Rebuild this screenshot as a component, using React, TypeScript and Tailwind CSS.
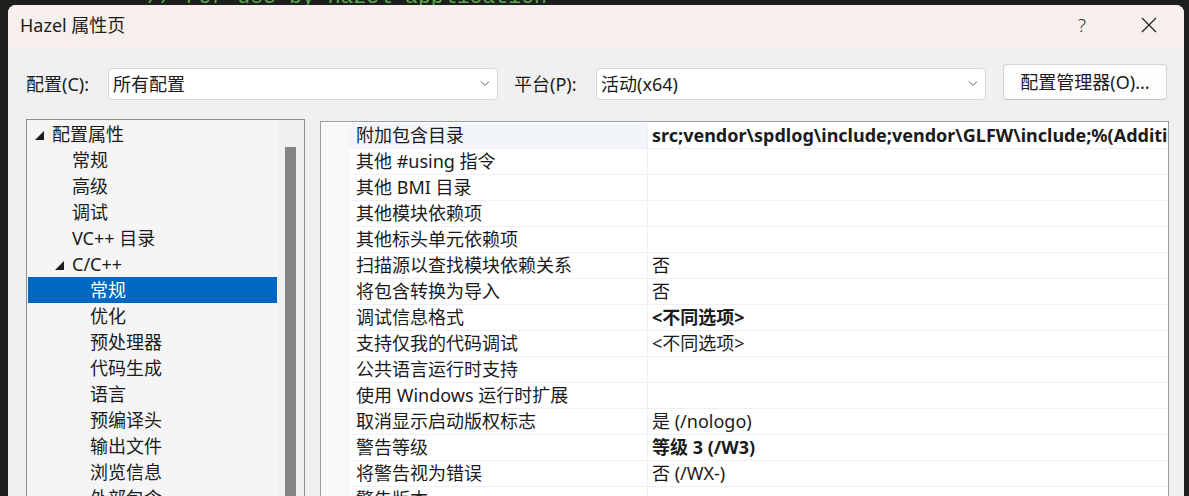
import React from "react";

type TreeItem = { label: string; level: 0 | 1 | 2; open?: boolean; selected?: boolean };

const tree: TreeItem[] = [
  { label: "配置属性", level: 0, open: true },
  { label: "常规", level: 1 },
  { label: "高级", level: 1 },
  { label: "调试", level: 1 },
  { label: "VC++ 目录", level: 1 },
  { label: "C/C++", level: 1, open: true },
  { label: "常规", level: 2, selected: true },
  { label: "优化", level: 2 },
  { label: "预处理器", level: 2 },
  { label: "代码生成", level: 2 },
  { label: "语言", level: 2 },
  { label: "预编译头", level: 2 },
  { label: "输出文件", level: 2 },
  { label: "浏览信息", level: 2 },
  { label: "外部包含", level: 2 },
  { label: "高级", level: 2 },
];

type Prop = { name: string; value?: string; bold?: boolean };

const props: Prop[] = [
  { name: "附加包含目录", value: "src;vendor\\spdlog\\include;vendor\\GLFW\\include;%(AdditionalIncludeDirectories)", bold: true },
  { name: "其他 #using 指令" },
  { name: "其他 BMI 目录" },
  { name: "其他模块依赖项" },
  { name: "其他标头单元依赖项" },
  { name: "扫描源以查找模块依赖关系", value: "否" },
  { name: "将包含转换为导入", value: "否" },
  { name: "调试信息格式", value: "<不同选项>", bold: true },
  { name: "支持仅我的代码调试", value: "<不同选项>" },
  { name: "公共语言运行时支持" },
  { name: "使用 Windows 运行时扩展" },
  { name: "取消显示启动版权标志", value: "是 (/nologo)" },
  { name: "警告等级", value: "等级 3 (/W3)", bold: true },
  { name: "将警告视为错误", value: "否 (/WX-)" },
  { name: "警告版本" },
  { name: "诊断格式" },
];

// expanded-node marker, the little ◢ wedge
function Wedge() {
  return (
    <svg width="10" height="10" viewBox="0 0 10 10" className="mt-[2px]">
      <path d="M10 1 L10 10 L1 10 Z" fill="#1c1c1c" />
    </svg>
  );
}

function Chevron() {
  return (
    <svg width="10" height="6" viewBox="0 0 10 6">
      <path d="M1 0.5 L5 4.5 L9 0.5" fill="none" stroke="#5c5c5c" strokeWidth="1" />
    </svg>
  );
}

function Combo({ text }: { text: string }) {
  return (
    <div className="flex h-[32px] w-[390px] items-center justify-between rounded-[4px] border border-[#d6d6d6] bg-white pl-[4px] pr-[7px]">
      <span className="leading-[30px]">{text}</span>
      <Chevron />
    </div>
  );
}

function TreeRow({ item }: { item: TreeItem }) {
  // indent depends on level and whether the row carries a wedge
  const pad = item.open
    ? item.level === 0
      ? "pl-[6px]"
      : "pl-[26px]"
    : item.level === 1
      ? "pl-[44px]"
      : "pl-[62px]";
  return (
    <div
      className={`flex h-[26px] items-center ${pad} ${
        item.selected ? "bg-[#0067c0] text-white" : "text-[#1b1b1b]"
      }`}
    >
      {item.open && (
        <span className="flex w-[18px] shrink-0">
          <Wedge />
        </span>
      )}
      <span className="whitespace-nowrap leading-[26px]">{item.label}</span>
    </div>
  );
}

export default function App() {
  return (
    <div className="h-[496px] w-[1189px] overflow-hidden bg-[#1e1e1e] font-['Noto_Sans','Noto_Sans_CJK_SC',sans-serif] text-[18px] text-[#1b1b1b]">
      {/* sliver of the code editor behind the dialog */}
      <div className="h-[5px] overflow-hidden">
        <div className="-mt-[14px] flex whitespace-pre pl-[147px] font-['Liberation_Mono',monospace] text-[21.5px] leading-[22px] text-[#57a64a]">
          // For use by Hazel application
        </div>
      </div>

      <div className="ml-[8px] flex h-[491px] w-[1176px] flex-col overflow-hidden rounded-t-[8px] bg-[#f0f0f0]">
        {/* title bar */}
        <div className="flex h-[43px] shrink-0 items-center bg-[#f6efec] pb-[3px] pl-[12px]">
          <span className="leading-[24px]">Hazel 属性页</span>
          <div className="ml-auto flex h-full items-center">
            <span className="flex w-[70px] justify-center text-[19px] font-light text-[#333]">?</span>
            <span className="flex w-[67px] justify-center pr-[3px]">
              <svg width="16" height="16" viewBox="0 0 16 16">
                <path d="M1 1 L15 15 M15 1 L1 15" stroke="#222" strokeWidth="1.2" />
              </svg>
            </span>
          </div>
        </div>

        {/* configuration / platform row */}
        <div className="mt-[16px] flex h-[36px] shrink-0 items-end pl-[18px]">
          <span className="flex h-[32px] w-[82px] items-center">配置(C):</span>
          <Combo text="所有配置" />
          <span className="ml-[16px] flex h-[32px] w-[82px] items-center">平台(P):</span>
          <Combo text="活动(x64)" />
          <button className="ml-[17px] flex h-[36px] w-[164px] items-center justify-center rounded-[4px] border border-[#d3d3d3] border-b-[#c2c2c2] bg-[#fdfdfd]">
            配置管理器(O)...
          </button>
        </div>

        {/* tree + property grid */}
        <div className="mt-[19px] flex min-h-0 flex-1 items-start pl-[18px]">
          <div className="flex h-[400px] w-[279px] shrink-0 border border-[#8e8e8e] bg-[#f5f5f5]">
            <div className="flex w-[251px] flex-col px-[1px] pt-[1px]">
              {tree.map((t, i) => (
                <TreeRow key={i} item={t} />
              ))}
            </div>
            <div className="flex flex-1 bg-[#f0f0f0] pl-[7px] pt-[27px]">
              <div className="h-full w-[11px] bg-[#858585]" />
            </div>
          </div>

          <div className="ml-[15px] mt-[2px] flex h-[400px] w-[849px] shrink-0 flex-col border-l border-r border-t border-[#9c9c9c] bg-white pt-[1px]">
            {props.map((p, i) => (
              <div key={i} className="flex h-[26px] shrink-0">
                <div className="w-[29px] shrink-0 bg-[#f8f8f8]" />
                <div
                  className={`flex w-[298px] shrink-0 items-center overflow-hidden whitespace-nowrap border-b border-r border-[#eef0f5] pl-[6px] ${
                    i === 0 ? "bg-[#f2f5fa]" : ""
                  }`}
                >
                  {p.name}
                </div>
                <div
                  className={`flex min-w-0 flex-1 items-center overflow-hidden whitespace-nowrap border-b border-[#eef0f5] pl-[4px] ${
                    p.bold ? "font-bold" : ""
                  }`}
                >
                  {p.value ?? ""}
                </div>
              </div>
            ))}
          </div>
        </div>
      </div>
    </div>
  );
}
